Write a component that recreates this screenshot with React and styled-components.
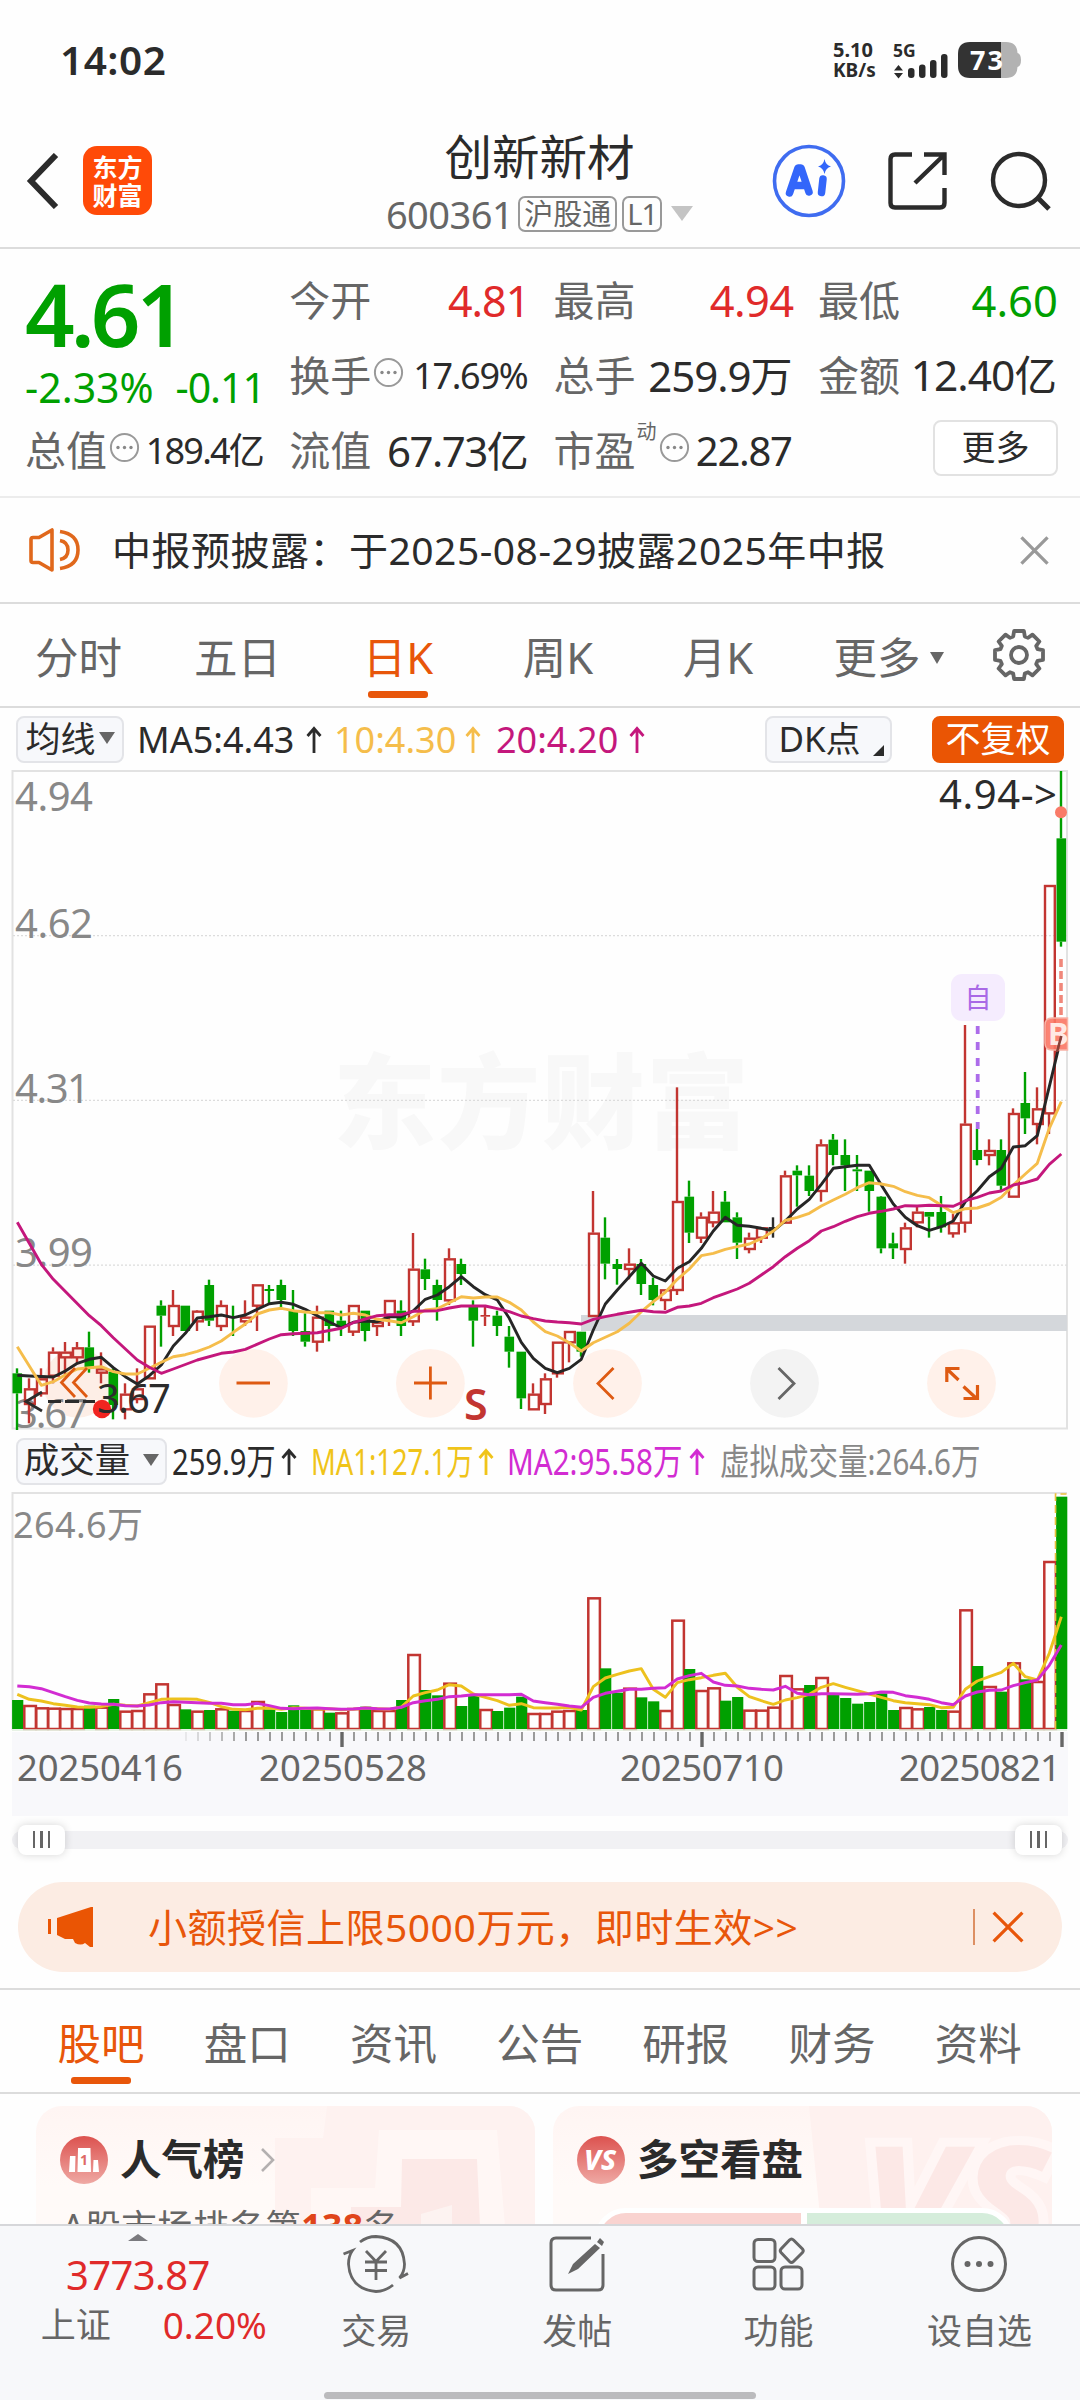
import React from "react";
import styled, { createGlobalStyle } from "styled-components";

const ink = "#2b2b2b";
const grey = "#666666";
const red = "#e02a2a";
const green = "#00a000";
const orange = "#e8560a";
const candleRed = "#c23531";

const Global = createGlobalStyle`
  * { box-sizing: border-box; }
  body {
    margin: 0;
    background: #fff;
    color: ${ink};
    font-family: "Noto Sans", "Noto Sans CJK SC", sans-serif;
    -webkit-font-smoothing: antialiased;
  }
`;

const Screen = styled.div`
  width: 1080px;
  height: 2400px;
  overflow: hidden;
  display: flex;
  flex-direction: column;
  background: #fefefe;
`;

const Label = styled.span`
  font-size: ${(p) => p.$size}px;
  line-height: 1;
  white-space: nowrap;
  color: ${(p) => p.$color || "inherit"};
  font-weight: ${(p) => p.$weight || 400};
  letter-spacing: ${(p) => p.$track || 0}px;
`;

/* ---------- status bar ---------- */
const StatusBar = styled.div`
  height: 120px;
  display: flex;
  align-items: flex-start;
  padding: 40px 57px 0 60px;
`;
const Clock = styled.div`
  font-size: 40.5px;
  line-height: 40px;
  font-weight: 600;
  flex: 1;
  letter-spacing: 0.5px;
`;
const NetSpeed = styled.div`
  display: flex;
  flex-direction: column;
  font-size: 20px;
  line-height: 21px;
  font-weight: 700;
  width: 60px;
  white-space: nowrap;
  margin-top: -1px;
  span + span {
    font-size: 19px;
  }
`;
const StatusIcon = styled.svg`
  display: block;
`;

/* ---------- header ---------- */
const Header = styled.header`
  height: 129px;
  border-bottom: 2px solid #dcdcdc;
  display: flex;
  align-items: center;
  padding: 0 29px 6px 26px;
`;
const Logo = styled.div`
  width: 69px;
  height: 69px;
  margin-left: 24px;
  border-radius: 14px;
  background: #ff4a08;
  color: #fff;
  font-size: 25px;
  line-height: 28px;
  font-weight: 700;
  display: flex;
  flex-direction: column;
  align-items: center;
  justify-content: center;
`;
const TitleBlock = styled.div`
  flex: 1;
  display: flex;
  flex-direction: column;
  align-items: center;
  gap: 14px;
  padding-left: 155px;
  margin-top: 5px;
`;
const CodeRow = styled.div`
  display: flex;
  align-items: center;
  gap: 5px;
`;
const Tag = styled.span`
  height: 36px;
  padding: 0 ${(p) => p.$pad}px;
  border: 2px solid #999;
  border-radius: 7px;
  font-size: 29px;
  line-height: 31px;
  letter-spacing: ${(p) => p.$track || 0}px;
  color: ${grey};
`;
const HeaderIcons = styled.div`
  display: flex;
  align-items: center;
  gap: 42px;
`;

const Caret = styled.span`
  width: 0;
  height: 0;
  flex: none;
  border-left: ${(p) => p.$w / 2}px solid transparent;
  border-right: ${(p) => p.$w / 2}px solid transparent;
  border-${(p) => (p.$up ? "bottom" : "top")}: ${(p) => p.$h}px solid ${(p) => p.$color || grey};
  margin-left: ${(p) => p.$ml || 0}px;
`;

/* ---------- quote ---------- */
const Quote = styled.section`
  height: 249px;
  border-bottom: 2px solid #ececec;
  padding: 14px 25px 0 25px;
  display: grid;
  grid-template-columns: repeat(4, 237px);
  column-gap: 27.3px;
  grid-template-rows: repeat(3, 75px);
`;
const PriceCell = styled.div`
  grid-row: span 2;
  display: flex;
  flex-direction: column;
  color: ${green};
`;
const BigPrice = styled.div`
  font-size: 87px;
  line-height: 100px;
  font-weight: 600;
  letter-spacing: -4px;
`;
const ChangeRow = styled.div`
  display: flex;
  justify-content: space-between;
  font-size: 41px;
  line-height: 46px;
  margin: 4px -3px 0 0;
`;
const Cell = styled.div`
  display: flex;
  align-items: center;
  justify-content: space-between;
  white-space: nowrap;
`;
const CellName = styled.span`
  display: flex;
  align-items: center;
  color: ${grey};
  font-size: 41px;
  line-height: 1;
`;
const CellValue = styled.span`
  font-size: ${(p) => p.$size || 42}px;
  line-height: 1;
  color: ${(p) => p.$color || ink};
  letter-spacing: ${(p) => p.$track ?? -1}px;
  margin-right: ${(p) => (p.$color ? -3 : -1)}px;
`;
const Sup = styled.sup`
  font-size: 20px;
  line-height: 1;
  align-self: flex-start;
  margin: -8px 0 0 1px;
`;
const MoreButton = styled.button`
  margin: 0 -3px 5px auto;
  width: 125px;
  height: 56px;
  border: 2px solid #e2e2e2;
  border-radius: 8px;
  background: #fff;
  font: inherit;
  font-size: 34px;
  line-height: 1;
  padding: 0 0 3px;
  color: ${ink};
`;

/* ---------- notice ---------- */
const Notice = styled.div`
  height: 106px;
  border-bottom: 2px solid #dcdcdc;
  display: flex;
  align-items: center;
  padding: 0 31px 0 28px;
`;
const NoticeText = styled.div`
  flex: 1;
  margin-left: ${(p) => p.$ml}px;
  padding-bottom: ${(p) => p.$lift || 0}px;
  font-size: 39px;
  line-height: 1;
  white-space: nowrap;
  letter-spacing: ${(p) => p.$track || 0}px;
`;

/* ---------- tabs ---------- */
const Tabs = styled.nav`
  height: ${(p) => (p.$top ? 106 : 104)}px;
  border-top: ${(p) => (p.$top ? "2px solid #dcdcdc" : "none")};
  border-bottom: 2px solid #dcdcdc;
  display: flex;
  padding: 0 ${(p) => p.$pad || 0}px;
`;
const Tab = styled.div`
  width: ${(p) => p.$w}px;
  flex: none;
  display: flex;
  flex-direction: column;
  align-items: center;
  color: ${(p) => (p.$active ? orange : grey)};
  padding-top: 32px;
  &::after {
    content: "";
    width: 60px;
    height: 7px;
    border-radius: 3px;
    margin-top: 12px;
    background: ${(p) => (p.$active ? orange : "transparent")};
  }
`;
const TabText = styled.span`
  display: flex;
  align-items: center;
  font-size: 43.5px;
  line-height: 43px;
  height: 43px;
  white-space: nowrap;
`;
const Gear = styled.svg`
  margin-top: -7px;
`;

/* ---------- indicator rows ---------- */
const Bar = styled.div`
  height: 62px;
  display: flex;
  align-items: center;
  padding: 0 16px;
`;
const Chip = styled.div`
  height: 47px;
  width: ${(p) => p.$w}px;
  margin-left: ${(p) => p.$ml || 0}px;
  flex: none;
  border: 2px solid ${(p) => (p.$solid ? "#ea5504" : "#e3e4e8")};
  border-radius: 8px;
  background: ${(p) => (p.$solid ? "#ea5504" : "#f7f8fb")};
  color: ${(p) => (p.$solid ? "#fff" : ink)};
  display: flex;
  align-items: center;
  justify-content: center;
  font-size: 35px;
  line-height: 1;
  white-space: nowrap;
  padding-bottom: 2px;
`;
const Corner = styled.span`
  border-left: 11px solid transparent;
  border-bottom: 11px solid ${ink};
  margin: 24px -5px 0 12px;
`;
const Values = styled.div`
  display: flex;
  align-items: center;
  flex: 1;
  margin-left: ${(p) => p.$ml}px;
  padding-top: 1px;
`;
const Value = styled.span`
  width: ${(p) => p.$w}px;
  flex: none;
  color: ${(p) => p.$color};
  font-size: 36px;
  line-height: 1;
  white-space: nowrap;
  display: flex;
  align-items: center;
`;
const Condensed = styled.span`
  display: inline-block;
  transform: scaleX(${(p) => p.$x});
  transform-origin: left;
`;
const Arrow = ({ color }) => (
  <svg width="16" height="28" viewBox="0 0 16 28" fill="none" stroke={color} strokeWidth="2.8">
    <path d="M8 27V3M1.5 10L8 2.5L14.5 10" />
  </svg>
);

const ChartSvg = styled.svg`
  display: block;
  flex: none;
  font-family: "Noto Sans", "Noto Sans CJK SC", sans-serif;
`;

/* ---------- slider ---------- */
const SliderRow = styled.div`
  height: 67px;
  display: flex;
  align-items: center;
  padding: 0 12px;
  margin-top: -10px;
`;
const Track = styled.div`
  flex: 1;
  height: 18px;
  border-radius: 9px;
  background: #f1f1f4;
  display: flex;
  align-items: center;
  justify-content: space-between;
  padding: 0 6px;
`;
const Thumb = styled.div`
  width: 47px;
  height: 30px;
  border-radius: 8px;
  background: #fff;
  box-shadow: 0 0 8px rgba(0, 0, 0, 0.16);
  display: flex;
  align-items: center;
  justify-content: center;
  gap: 5px;
  i {
    width: 2.5px;
    height: 17px;
    background: ${grey};
  }
`;

/* ---------- promo banner ---------- */
const Promo = styled.div`
  height: 90px;
  margin: 9px 18px 16px 18px;
  border-radius: 45px;
  background: #fcece3;
  color: ${orange};
  display: flex;
  align-items: center;
  padding: 0 38px 0 29px;
`;
const Divider = styled.span`
  width: 2px;
  height: 36px;
  background: #dd8f63;
  margin-right: 17px;
`;

/* ---------- cards ---------- */
const Cards = styled.div`
  height: 130px;
  overflow: hidden;
  display: grid;
  grid-template-columns: 499px 499px;
  column-gap: 18px;
  padding: 12px 0 0 36px;
`;
const Card = styled.div`
  height: 240px;
  border-radius: 26px;
  background: linear-gradient(#fff5f3, #fffaf8 80px);
  position: relative;
  overflow: hidden;
`;
const CardArt = styled.svg`
  position: absolute;
  right: 0;
  top: 0;
`;
const CardHead = styled.div`
  position: relative;
  display: flex;
  align-items: center;
  padding: 30px 0 0 24px;
  height: 78px;
`;
const CardTitle = styled.span`
  font-size: 41.5px;
  line-height: 48px;
  height: 51px;
  font-weight: 600;
  margin: 0 15px 0 12px;
`;
const Rank = styled.div`
  position: relative;
  display: flex;
  align-items: baseline;
  font-size: 35.5px;
  line-height: 40px;
  color: ${grey};
  margin: 22px 0 0 26px;
  letter-spacing: 0.5px;
  b { color: #e0451a; }
`;
const Battle = styled.div`
  position: relative;
  display: flex;
  gap: 6px;
  width: 420px;
  height: 60px;
  border: 5px solid #fff;
  border-radius: 32px 32px 0 0;
  overflow: hidden;
  margin: 24px 0 0 41px;
  background: #fff;
`;
const Side = styled.div`
  flex: 1;
  background: ${(p) => p.$bg};
`;

/* ---------- bottom bar ---------- */
const BottomBar = styled.footer`
  flex: 1;
  background: #f7f8fa;
  border-top: 2px solid #d6d7da;
  display: flex;
  flex-direction: column;
  align-items: center;
  z-index: 1;
`;
const BottomItems = styled.div`
  width: 1080px;
  height: 166px;
  display: flex;
`;
const IndexBox = styled.div`
  width: 276px;
  display: flex;
  flex-direction: column;
  align-items: center;
  padding-top: 8px;
`;
const IndexValue = styled.div`
  font-size: 40px;
  line-height: 48px;
  letter-spacing: -0.6px;
  color: ${red};
  margin-top: 10px;
`;
const IndexRow = styled.div`
  width: 226px;
  margin: 1px 0 0 32px;
  display: flex;
  align-items: center;
  justify-content: space-between;
  height: 48px;
`;
const NavItem = styled.div`
  width: 201.3px;
  display: flex;
  flex-direction: column;
  align-items: center;
  padding-top: 9px;
  gap: 20px;
`;
const HomeBar = styled.div`
  width: 432px;
  height: 7px;
  border-radius: 4px;
  background: #bbbbbd;
  margin-bottom: auto;
`;

/* ---------- market data ---------- */
const STEP = 12;
const xAt = (i) => 17.3 + i * STEP;

/* kind, high, body top, body bottom, low — in thirds of a pixel below the segment base */
const segments = [
  {
    base: 1150,
    start: 0,
    rows: [
      ["g", 655, 670, 730, 840], ["r", 685, 715, 762, 820], ["r", 655, 685, 730, 740],
      ["r", 592, 605, 677, 700], ["r", 576, 605, 622, 680], ["r", 576, 592, 622, 640],
      ["g", 545, 592, 655, 668], ["r", 607, 655, 668, 700], ["g", 655, 665, 765, 808],
      ["r", 700, 731, 778, 808], ["r", 655, 715, 747, 760], ["r", 527, 527, 685, 685],
      ["g", 451, 467, 497, 590], ["r", 420, 465, 528, 558], ["g", 467, 467, 543, 543],
      ["r", 480, 482, 514, 543], ["g", 389, 405, 512, 528], ["r", 451, 465, 528, 543],
      ["g", 467, 498, 504, 558], ["r", 451, 500, 514, 528], ["r", 403, 403, 467, 543],
      ["g", 405, 417, 423, 460], ["g", 389, 405, 450, 480], ["g", 420, 480, 543, 558],
      ["g", 490, 543, 575, 590], ["r", 467, 500, 575, 605], ["g", 482, 482, 528, 574],
      ["g", 482, 512, 530, 558], ["r", 465, 465, 545, 558], ["g", 482, 482, 543, 574],
      ["r", 510, 515, 528, 558], ["r", 450, 450, 500, 528], ["g", 451, 482, 528, 558],
      ["r", 249, 356, 514, 528], ["g", 326, 358, 387, 420], ["g", 389, 405, 450, 512],
      ["r", 295, 325, 451, 465], ["g", 326, 342, 372, 405], ["g", 451, 467, 512, 590],
      ["r", 465, 495, 500, 528], ["g", 482, 497, 528, 558], ["g", 528, 560, 605, 653],
      ["g", 605, 605, 745, 777], ["r", 700, 731, 778, 778],
    ],
  },
  {
    base: 1050,
    start: 44,
    rows: [
      ["r", 970, 985, 1062, 1092], ["r", 875, 875, 970, 983], ["r", 843, 843, 877, 937],
      ["g", 845, 845, 905, 920], ["r", 423, 548, 798, 798], ["g", 502, 563, 641, 688],
      ["g", 627, 642, 657, 704], ["r", 595, 641, 657, 688], ["g", 627, 642, 702, 735],
      ["g", 683, 705, 750, 766], ["r", 718, 718, 750, 780], ["r", 112, 453, 720, 735],
      ["g", 392, 440, 548, 579], ["r", 487, 500, 563, 579], ["r", 423, 485, 517, 532],
      ["g", 423, 455, 517, 517], ["g", 487, 502, 578, 627], ["r", 548, 563, 597, 610],
      ["r", 532, 532, 563, 579], ["k", 502, 531, 537, 563], ["r", 362, 376, 518, 518],
      ["g", 346, 362, 376, 470], ["g", 346, 377, 423, 438], ["r", 268, 283, 423, 455],
      ["g", 252, 269, 315, 346], ["g", 268, 315, 346, 423], ["g", 315, 358, 364, 423],
      ["g", 362, 362, 423, 485], ["g", 438, 440, 595, 610], ["g", 548, 580, 595, 627],
      ["r", 518, 532, 597, 641], ["r", 470, 485, 517, 532], ["g", 486, 486, 500, 563],
      ["g", 438, 486, 532, 548], ["r", 492, 517, 550, 563], ["r", -75, 221, 518, 548],
      ["g", 237, 300, 330, 346], ["r", 268, 300, 315, 346], ["g", 268, 300, 407, 420],
      ["r", 175, 189, 440, 440], ["g", 66, 159, 205, 252], ["r", 112, 175, 222, 283],
      ["r", -495, -495, 190, 252], ["g", -837, -635, -325, -310],
    ],
  },
];

const candles = segments.flatMap((s) =>
  s.rows.map(([kind, ...v], i) => ({ kind, i: s.start + i, y: v.map((n) => s.base + n / 3) }))
);

/* moving averages: [index, y] pairs per segment */
const ma5 = [
  [0, 676, 1, 678, 3, 681, 4, 663, 5, 640, 6, 628, 7, 622, 8, 653, 9, 680, 10, 702, 11, 677, 12, 645, 13, 588, 14, 550, 15, 504, 16, 500, 17, 495, 18, 503, 19, 495, 20, 478, 21, 461, 22, 457, 23, 463, 24, 478, 25, 497, 26, 516, 27, 533, 28, 517, 29, 513, 30, 515, 31, 500, 32, 500, 33, 482, 34, 448, 35, 435, 36, 410, 37, 380, 38, 410, 39, 434, 40, 450, 41, 505, 42, 577, 43, 625],
  [44, 955, 45, 968, 46, 955, 47, 928, 48, 840, 49, 762, 50, 720, 51, 680, 52, 640, 53, 678, 54, 693, 55, 655, 56, 635, 57, 595, 58, 543, 59, 502, 60, 526, 61, 529, 62, 535, 63, 543, 64, 513, 65, 477, 66, 448, 67, 403, 68, 355, 69, 350, 70, 346, 71, 346, 72, 405, 73, 462, 74, 502, 75, 527, 76, 541, 77, 530, 78, 513, 79, 455, 80, 422, 81, 380, 82, 355, 83, 291, 84, 287, 85, 257, 86, 110, 87, -40],
];
const ma10 = [
  [0, 590, 2, 706, 3, 695, 4, 675, 5, 657, 6, 653, 7, 650, 8, 665, 9, 672, 10, 672, 11, 655, 12, 637, 13, 620, 14, 614, 15, 604, 16, 591, 17, 573, 18, 547, 19, 522, 20, 492, 21, 480, 22, 475, 23, 482, 24, 486, 25, 488, 26, 488, 27, 495, 28, 490, 29, 495, 30, 508, 31, 512, 32, 518, 33, 500, 34, 480, 35, 476, 36, 458, 37, 440, 38, 444, 39, 441, 40, 441, 41, 457, 42, 480, 43, 516],
  [44, 845, 45, 858, 46, 878, 47, 903, 48, 878, 49, 862, 50, 845, 51, 820, 52, 785, 53, 755, 54, 727, 55, 688, 56, 657, 57, 617, 58, 610, 59, 598, 60, 590, 61, 582, 62, 566, 63, 543, 64, 511, 65, 502, 66, 490, 67, 468, 68, 450, 69, 433, 70, 413, 71, 398, 72, 402, 73, 409, 74, 425, 75, 436, 76, 443, 77, 466, 78, 488, 79, 476, 80, 474, 81, 462, 82, 442, 83, 405, 84, 372, 85, 340, 86, 235, 87, 155],
];
const ma20 = [
  [0, 217, 2, 343, 3, 388, 6, 497, 7, 527, 8, 563, 10, 630, 11, 652, 12, 670, 13, 657, 15, 630, 17, 610, 18, 606, 19, 598, 21, 567, 22, 554, 23, 551, 25, 548, 27, 535, 28, 518, 29, 507, 30, 497, 31, 494, 32, 494, 33, 484, 35, 482, 36, 474, 37, 468, 39, 468, 40, 476, 41, 485, 42, 498, 43, 506],
  [44, 813, 45, 816, 46, 818, 47, 822, 48, 808, 49, 800, 50, 793, 52, 781, 53, 785, 54, 787, 55, 772, 56, 768, 57, 760, 58, 743, 59, 730, 60, 717, 61, 700, 62, 675, 63, 650, 64, 620, 65, 595, 66, 572, 67, 543, 68, 530, 69, 514, 70, 500, 71, 490, 72, 484, 73, 477, 74, 467, 75, 468, 76, 466, 77, 467, 78, 469, 79, 452, 80, 442, 81, 429, 82, 423, 83, 405, 84, 398, 85, 387, 86, 343, 87, 312],
];
const pairs = (flat, base) => {
  const out = [];
  for (let k = 0; k < flat.length; k += 2) out.push(`${xAt(flat[k])},${(base + flat[k + 1] / 3).toFixed(1)}`);
  return out;
};
const maPoints = ([a, b]) => [...pairs(a, 1150), ...pairs(b, 1050)].join(" ");

const volumeTops = [
  660, 675, 682, 683, 684, 684, 677, 680, 657, 692, 690, 640, 610, 672, 688, 692, 690, 685, 692, 690, 663, 688,
  696, 676, 690, 685, 698, 697, 684, 680, 690, 690, 660, 522, 630, 646, 608, 678, 648, 687, 693, 683, 650, 699,
  699, 692, 690, 690, 352, 565, 638, 623, 652, 664, 690, 419, 567, 630, 622, 662, 651, 689, 689, 680, 585, 625,
  615, 591, 640, 654, 671, 666, 640, 690, 681, 685, 681, 690, 692, 388, 558, 618, 635, 547, 598, 603, 243, 50,
];
/* sessions that closed below their open but above the previous close */
const risingVolume = new Set([12, 27, 65]);
const fallingVolume = new Set([60]);
const volMa1 = [
  643, 658, 663, 671, 676, 681, 682, 680, 673, 676, 678, 668, 658, 657, 657, 658, 667, 680, 688, 689, 685, 684,
  688, 683, 685, 687, 686, 689, 688, 684, 686, 688, 681, 648, 638, 630, 614, 618, 642, 652, 662, 676, 671, 683,
  684, 684, 682, 690, 620, 594, 583, 573, 566, 628, 652, 608, 599, 593, 586, 580, 622, 650, 662, 673, 660, 653,
  643, 622, 611, 622, 632, 642, 652, 662, 668, 671, 674, 683, 682, 628, 603, 590, 577, 550, 590, 600, 520, 410,
];
const volMa2 = [
  618, 620, 626, 638, 650, 661, 669, 672, 673, 677, 678, 675, 668, 665, 667, 668, 670, 670, 674, 674, 670, 677,
  685, 686, 685, 684, 686, 688, 687, 684, 686, 687, 682, 668, 662, 658, 650, 648, 644, 644, 644, 644, 643, 663,
  668, 673, 678, 682, 652, 640, 634, 628, 628, 625, 623, 597, 587, 580, 606, 616, 618, 625, 628, 630, 619, 640,
  644, 641, 641, 642, 643, 641, 636, 637, 647, 652, 658, 668, 674, 648, 636, 631, 630, 617, 608, 600, 556, 495,
];
const volY = (v) => 1480 + v / 3;
const volLine = (arr) => arr.map((v, i) => `${xAt(i)},${volY(v).toFixed(1)}`).join(" ");
/* index 59 opened a filled bar in the volume pane */
fallingVolume.add(59);

function Candle({ kind, i, y }) {
  const [h, t, b, l] = y;
  const x = xAt(i);
  const color = kind === "g" ? green : kind === "k" ? ink : candleRed;
  const hollow = kind === "r" && b - t > 3;
  return (
    <g stroke={color} strokeWidth="2.4">
      {h < t && <line x1={x - 0.3} x2={x - 0.3} y1={h} y2={t} />}
      {l > b && <line x1={x - 0.3} x2={x - 0.3} y1={b} y2={l} />}
      {hollow ? (
        <rect x={x - 4.3} y={t + 1} width="9.8" height={Math.max(b - t - 1, 2)} fill="none" />
      ) : (
        <rect x={x - 4.8} y={t} width="9.6" height={b - t} fill={color} stroke="none" />
      )}
    </g>
  );
}

const roundButtons = [
  [77.5, "#fdeee6", <path key="p" d="M75 1368L61.5 1382.5L75 1397M87 1368L73.5 1382.5L87 1397" />],
  [253.4, "#fff1ea", <path key="p" d="M236.5 1383H270" />],
  [430.4, "#fff1ea", <path key="p" d="M414 1383H447M430.4 1366.5V1399.5" />],
  [607.5, "#fff1ea", <path key="p" d="M613.5 1368L598 1383.5L613.5 1399" />],
  [784.5, "#f3f3f3", <path key="p" d="M778.5 1368L794 1383.5L778.5 1399" stroke={grey} />],
  [961.5, "#fff1ea", <path key="p" strokeWidth="3.2" d="M959.5 1368.5H946.8V1382M947 1369L958.5 1380M963.5 1386.5L976 1398M977.5 1385V1398.5H963.5" />],
];

function PriceChart() {
  const grid = [[935.6, 938, "4.62"], [1100.4, 1103, "4.31"], [1265.2, 1267, "3.99"]];
  return (
    <ChartSvg width="1080" height="660" viewBox="0 770 1080 660">
      <rect x="12.5" y="771" width="1054.5" height="657.5" fill="none" stroke="#e2e2e2" strokeWidth="2" />
      <text x="333" y="1141" fontSize="103" fontWeight="900" fill="#f8f8f8" fontFamily="Noto Sans CJK SC" textLength="416">东方财富</text>
      {grid.map(([y]) => (
        <line key={y} x1="13" x2="1067" y1={y} y2={y} stroke="#dcdcdc" strokeWidth="1.2" strokeDasharray="2 2" />
      ))}
      <rect x="581" y="1315" width="486" height="16" fill="#d4d7db" />
      {roundButtons.map(([cx, fill]) => (
        <circle key={cx} cx={cx} cy="1383.3" r="34.4" fill={fill} />
      ))}
      <g fontSize="40" fill="#888">
        <text x="15" y="811" textLength="78">4.94</text>
        {grid.map(([, y, t]) => (
          <text key={t} x="15" y={y} textLength={t === "4.31" ? 75 : 78}>{t}</text>
        ))}
        <text x="15" y="1427.5" textLength="73">3.67</text>
      </g>
      {candles.map((c) => (
        <Candle key={c.i} {...c} />
      ))}
      <circle cx="102" cy="1409" r="9.2" fill="#f12420" />
      <g fill="none" strokeWidth="2.9" strokeLinejoin="round">
        <polyline points={maPoints(ma5)} stroke="#262626" />
        <polyline points={maPoints(ma10)} stroke="#f5bd4b" />
        <polyline points={maPoints(ma20)} stroke="#c4177c" />
      </g>
      <g fill="none" stroke="#de5a12" strokeWidth="2.8">
        {roundButtons.map(([cx, , icon]) => (
          <g key={cx}>{icon}</g>
        ))}
      </g>
      <path d="M42 1392L26 1401.5L42 1411M48 1401.5H61M65 1401.5H79M83 1401.5H95" fill="none" stroke={ink} strokeWidth="2.8" />
      <text x="97" y="1413" fontSize="40" fill={ink} textLength="74">3.67</text>
      <text x="464" y="1420" fontSize="43" fontWeight="600" fill={candleRed}>S</text>
      <text x="939" y="809" fontSize="40" fill={ink} textLength="118">4.94-&gt;</text>
      <circle cx="1061" cy="812.3" r="6" fill="#f97b68" />
      <line x1="1061" x2="1061" y1="959" y2="1016" stroke="#f0877a" strokeWidth="3.6" strokeDasharray="8 4" />
      <line x1="977.7" x2="977.7" y1="1026" y2="1129" stroke="#ac6cea" strokeWidth="3.8" strokeDasharray="8 8" />
      <rect x="951" y="974" width="54" height="47" rx="11" fill="#f5ecfe" />
      <text x="978" y="1007.5" fontSize="27" fill="#a969e6" textAnchor="middle">自</text>
      <path d="M1067.5 1018H1052Q1045 1018 1045 1025V1043Q1045 1050 1052 1050H1067.5Z" fill="#fb7564" fillOpacity="0.9" stroke="#f9b3a6" strokeWidth="1.5" />
      <svg x="1046" y="1018" width="22" height="32">
        <text x="2" y="27" fontSize="31" fontWeight="700" fill="#ffe9e5">B</text>
      </svg>
      <line x1="1057" y1="1052" x2="1061.3" y2="1036" stroke="#8a4038" strokeWidth="2.6" />
    </ChartSvg>
  );
}

function VolumeChart() {
  return (
    <ChartSvg width="1080" height="324" viewBox="0 1492 1080 324">
      <path d="M12.5 1730V1493H1067" fill="none" stroke="#e2e2e2" strokeWidth="2" />
      <rect x="12" y="1732" width="1056" height="84" fill="#f8f8fb" />
      <text x="13" y="1538" fontSize="36" fill="#888" textLength="130">264.6万</text>
      {volumeTops.map((v, i) => {
        const y = volY(v);
        const isGreen = (candles[i].kind === "g" && !risingVolume.has(i)) || fallingVolume.has(i);
        return isGreen ? (
          <rect key={i} x={xAt(i) - 5.2} y={y} width="11.2" height={1729 - y} fill={green} />
        ) : (
          <rect key={i} x={xAt(i) - 5} y={y + 1} width="11.6" height={1728 - y} fill="#fefefe" stroke={candleRed} strokeWidth="2.5" />
        );
      })}
      <path d="M1055.5 1729V1494H1066.5" fill="none" stroke="#eac13c" strokeWidth="1.6" strokeDasharray="8 4" />
      <line x1="12" x2="1067" y1="1730" y2="1730" stroke="#dfeedd" strokeWidth="1.5" />
      <g fill="none" strokeWidth="2.9" strokeLinejoin="round">
        <polyline points={volLine(volMa1)} stroke="#edc11e" />
        <polyline points={volLine(volMa2)} stroke="#d22cd2" />
      </g>
      {candles.slice(14).map(({ i }) => {
        const major = i === 27 || i === 57 || i === 87;
        return (
          <line
            key={i}
            x1={xAt(i) + 0.7}
            x2={xAt(i) + 0.7}
            y1="1732"
            y2={major ? 1747 : 1741}
            stroke={major ? "#666" : "#909090"}
            strokeWidth={major ? 3.4 : 1.8}
            opacity={Math.min(1, (i - 13) / 6)}
          />
        );
      })}
      <g fontSize="36.5" fill={grey}>
        <text x="17" y="1781" textLength="166">20250416</text>
        <text x="259" y="1781" textLength="168">20250528</text>
        <text x="620" y="1781" textLength="164">20250710</text>
        <text x="899" y="1781" textLength="162">20250821</text>
      </g>
    </ChartSvg>
  );
}

const DotsIcon = styled.svg`
  margin: -7px 0 0 2px;
`;
const Dots = () => (
  <DotsIcon width="31" height="31" viewBox="0 0 31 31">
    <circle cx="15.5" cy="15.5" r="13.6" fill="none" stroke="#999" strokeWidth="2" />
    <g fill="#888">
      <circle cx="9" cy="15.5" r="1.7" />
      <circle cx="15.5" cy="15.5" r="1.7" />
      <circle cx="22" cy="15.5" r="1.7" />
    </g>
  </DotsIcon>
);

function Item({ name, value, dots, sup, ...rest }) {
  return (
    <Cell>
      <CellName>
        {name}
        {sup && <Sup>{sup}</Sup>}
        {dots && <Dots />}
      </CellName>
      <CellValue $size={rest.size} $color={rest.color} $track={rest.track}>{value}</CellValue>
    </Cell>
  );
}

const Cross = ({ color, size, w }) => (
  <svg width={size} height={size} viewBox="0 0 30 30" stroke={color} strokeWidth={w} fill="none">
    <path d="M1.5 1.5L28.5 28.5M28.5 1.5L1.5 28.5" />
  </svg>
);

function gearPath(cx, cy) {
  const pts = [];
  for (let k = 0; k < 8; k++) {
    const a = (k * Math.PI) / 4 - Math.PI / 2;
    [[-0.2, 24.5], [0.2, 24.5], [0.3, 19.5], [Math.PI / 4 - 0.3, 19.5]].forEach(([d, r]) => {
      pts.push(`${(cx + r * Math.cos(a + d)).toFixed(1)} ${(cy + r * Math.sin(a + d)).toFixed(1)}`);
    });
  }
  return `M${pts.join("L")}Z`;
}

export default function App() {
  return (
    <>
      <Global />
      <Screen>
        <StatusBar>
          <Clock>14:02</Clock>
          <NetSpeed>
            <span>5.10</span>
            <span>KB/s</span>
          </NetSpeed>
          <StatusIcon width="130" height="40" viewBox="892 40 130 40">
            <text x="892" y="56.5" fontSize="17.500" fontWeight="700" fill={ink}>5G</text>
            <path d="M893 70.5L897.5 65L902 70.5ZM893 73L897.5 78.5L902 73Z" fill={ink} />
            <g fill={ink}>
              <rect x="907" y="68" width="6.5" height="10" rx="3" />
              <rect x="918" y="64.5" width="6.5" height="13.5" rx="3" />
              <rect x="929" y="60" width="6.5" height="18" rx="3" />
              <rect x="940" y="54" width="6.5" height="24" rx="3" />
            </g>
            <path d="M1000 42H1005Q1016 42 1016.5 53Q1020 54 1020 60Q1020 66 1016.5 67Q1016 78 1005 78H1000Z" fill="#b2b2b2" />
            <path d="M1000 42H969Q957 42 957 54V66Q957 78 969 78H1000Z" fill="#333" />
            <text x="969" y="69.5" fontSize="27" fontWeight="700" fill="#fff" textLength="33">73</text>
          </StatusIcon>
        </StatusBar>

        <Header>
          <svg width="33" height="56" viewBox="0 0 33 56" fill="none" stroke={ink} strokeWidth="6">
            <path d="M30 2L5 28L30 54" />
          </svg>
          <Logo>
            <span>东方</span>
            <span>财富</span>
          </Logo>
          <TitleBlock>
            <Label $size={47.5}>创新新材</Label>
            <CodeRow>
              <Label $size={38} $color={grey} $track={-0.5}>600361</Label>
              <Tag $pad={4}>沪股通</Tag>
              <Tag $pad={3} $track={-1}>L1</Tag>
              <Caret $w={22} $h={15} $color="#c4c4c4" $ml={4} />
            </CodeRow>
          </TitleBlock>
          <HeaderIcons>
            <svg width="74" height="74" viewBox="0 0 74 74">
              <circle cx="37" cy="37" r="34.5" fill="none" stroke="#3f6cf0" strokeWidth="3.6" />
              <g fill="none" stroke="#3366fa" strokeWidth="7.5" strokeLinecap="round" strokeLinejoin="round">
                <path d="M17.500 49L26 24H29L37 48M22 41.500H34" />
                <path d="M51 35L49.500 48.500" />
              </g>
              <path d="M52.500 15Q53.500 21 59 22.500Q53.500 24 52.500 30Q51.500 24 46 22.500Q51.500 21 52.500 15Z" fill="#3366fa" />
            </svg>
            <svg width="59" height="58" viewBox="0 0 59 58" fill="none" stroke={ink} strokeWidth="4.400">
              <path d="M24 2.500H7Q2.500 2.500 2.500 7V51Q2.500 55.500 7 55.500H52Q56.500 55.500 56.500 51V36M36 2.500H56.500V23M56 3L27 31" />
            </svg>
            <svg width="62" height="60" viewBox="0 0 62 60" fill="none" stroke={ink} strokeWidth="4.400">
              <circle cx="30" cy="29" r="26" />
              <path d="M48 46L60 58" strokeWidth="5" />
            </svg>
          </HeaderIcons>
        </Header>

        <Quote>
          <PriceCell>
            <BigPrice>4.61</BigPrice>
            <ChangeRow>
              <Label $size={41}>-2.33%</Label>
              <Label $size={41} $track={-1}>-0.11</Label>
            </ChangeRow>
          </PriceCell>
          <Item name="今开" value="4.81" color={red} size={43} track={-1} />
          <Item name="最高" value="4.94" color={red} size={43.5} track={-0.6} />
          <Item name="最低" value="4.60" color={green} size={43.5} track={0} />
          <Item name="换手" dots value="17.69%" size={36} track={-1.3} />
          <Item name="总手" value="259.9万" size={42} track={-1} />
          <Item name="金额" value="12.40亿" size={42.5} track={-1} />
          <Item name="总值" dots value="189.4亿" size={36} track={-1.8} />
          <Item name="流值" value="67.73亿" size={42} track={-1.5} />
          <Item name="市盈" sup="动" dots value="22.87" size={40} track={-1.3} />
          <Cell>
            <MoreButton>更多</MoreButton>
          </Cell>
        </Quote>

        <Notice>
          <svg width="55" height="44" viewBox="0 0 55 44" fill="none" stroke="#e0681c" strokeWidth="3.600" strokeLinejoin="round">
            <path d="M3 11.500Q3 9.500 5 9.500H11L24 2V42L11 34.500H5Q3 34.500 3 32.500Z" />
            <path d="M32 12.500Q40 14 40 22Q40 30 32 31.500M32 3.500Q50 6 50 22Q50 38 32 40.500" />
          </svg>
          <NoticeText $ml={29} $lift={1} $track={0.5}>中报预披露：于2025-08-29披露2025年中报</NoticeText>
          <Cross color="#999" size={29} w={3.4} />
        </Notice>

        <Tabs>
          <Tab $w={157}><TabText>分时</TabText></Tab>
          <Tab $w={161}><TabText>五日</TabText></Tab>
          <Tab $w={160} $active><TabText>日K</TabText></Tab>
          <Tab $w={160}><TabText>周K</TabText></Tab>
          <Tab $w={160}><TabText>月K</TabText></Tab>
          <Tab $w={181}><TabText>更多<Caret $w={15} $h={12} $ml={9} /></TabText></Tab>
          <Tab $w={79}>
            <Gear width="52" height="52" viewBox="0 0 52 52" fill="none" stroke={grey} strokeWidth="3.800" strokeLinejoin="round">
              <path d={gearPath(26, 26)} />
              <circle cx="26" cy="26" r="8" />
            </Gear>
          </Tab>
        </Tabs>

        <Bar>
          <Chip $w={108}>
            <Label $size={35}>均线</Label>
            <Caret $w={16} $h={12} $ml={3} />
          </Chip>
          <Values $ml={13}>
            <Value $w={169} $color={ink}>MA5:4.43</Value>
            <Value $w={28} $color={ink}><Arrow color={ink} /></Value>
            <Value $w={131} $color="#f5bd4b">10:4.30</Value>
            <Value $w={31} $color="#f5bd4b"><Arrow color="#f5bd4b" /></Value>
            <Value $w={133} $color="#c4177c">20:4.20</Value>
            <Value $w={30} $color="#c4177c"><Arrow color="#c4177c" /></Value>
          </Values>
          <Chip $w={127}>
            DK点<Corner />
          </Chip>
          <Chip $w={132} $ml={40} $solid>不复权</Chip>
        </Bar>

        <PriceChart />

        <Bar>
          <Chip $w={151}>
            <Label $size={35.5}>成交量</Label>
            <Caret $w={16} $h={12} $ml={13} />
          </Chip>
          <Values $ml={5}>
            <Value $w={109}><Condensed $x={0.81}>259.9万</Condensed></Value>
            <Value $w={30}><Arrow color={ink} /></Value>
            <Value $w={167} $color="#f0c419"><Condensed $x={0.76}>MA1:127.1万</Condensed></Value>
            <Value $w={29}><Arrow color="#f0c419" /></Value>
            <Value $w={182} $color="#d22cd2"><Condensed $x={0.82}>MA2:95.58万</Condensed></Value>
            <Value $w={31}><Arrow color="#d22cd2" /></Value>
            <Value $w={260} $color="#888"><Condensed $x={0.82}>虚拟成交量:264.6万</Condensed></Value>
          </Values>
        </Bar>

        <VolumeChart />

        <SliderRow>
          <Track>
            <Thumb><i /><i /><i /></Thumb>
            <Thumb><i /><i /><i /></Thumb>
          </Track>
        </SliderRow>

        <Promo>
          <svg width="50" height="40" viewBox="0 0 50 40" fill="#ea5504">
            <path d="M1 12H4V27H1ZM10 11L44 0H46V40H43L38 36Q34 39 28 36L26 32H18L10 28Z" />
          </svg>
          <NoticeText $ml={51} $lift={1} $track={0.5}>小额授信上限5000万元，即时生效&gt;&gt;</NoticeText>
          <Divider />
          <Cross color={orange} size={32} w={3} />
        </Promo>

        <Tabs $top $pad={28}>
          {["股吧", "盘口", "资讯", "公告", "研报", "财务", "资料"].map((t, i) => (
            <Tab key={t} $w={146.2} $active={i === 0}><TabText>{t}</TabText></Tab>
          ))}
        </Tabs>

        <Cards>
          <Card>
            <CardArt width="260" height="120" viewBox="0 0 260 120">
              <path d="M52 0H260V120H0V32H48Z" fill="#fef2f0" />
              <path d="M104 24H222L230 120H36V82H100Z" fill="#fff7f5" />
              <path d="M127 53H202L205 120H76V101H126Z" fill="#fce9e7" />
              <path d="M146 108L177 99V120H146Z" fill="#fdf3f1" />
            </CardArt>
            <CardHead>
              <svg width="48" height="48" viewBox="0 0 48 48">
                <defs>
                  <linearGradient id="badge" x1="0" y1="0" x2="0" y2="1">
                    <stop offset="0" stopColor="#dc524f" />
                    <stop offset="1" stopColor="#efa9a4" />
                  </linearGradient>
                </defs>
                <circle cx="24" cy="24" r="24" fill="url(#badge)" />
                <path d="M10 20H15.500L15 36H9ZM18 12H30.500L31 36H17.500ZM33.500 24H38L39 36H33Z" fill="#fff" />
                <text x="24" y="29" fontSize="14" fontWeight="700" fill="#de6a66" textAnchor="middle">1</text>
              </svg>
              <CardTitle>人气榜</CardTitle>
              <svg width="16" height="24" viewBox="0 0 16 24" fill="none" stroke="#b4b0b0" strokeWidth="2.600">
                <path d="M2 1L13 12L2 23" />
              </svg>
            </CardHead>
            <Rank>A股市场排名第<b>138</b>名</Rank>
          </Card>
          <Card>
            <CardArt width="245" height="120" viewBox="0 0 245 120">
              <path d="M2 0H245V120H14Z" fill="#fef1ef" />
              <text x="55" y="148" fontSize="150" fontWeight="800" fontStyle="italic" fill="#fce8e6" stroke="#fff6f5" strokeWidth="18" paintOrder="stroke" textLength="188" lengthAdjust="spacingAndGlyphs">VS</text>
            </CardArt>
            <CardHead>
              <svg width="48" height="48" viewBox="0 0 48 48">
                <circle cx="24" cy="24" r="24" fill="url(#badge)" />
                <text x="7" y="34" fontSize="29" fontWeight="800" fontStyle="italic" fill="#fff" textLength="32" lengthAdjust="spacingAndGlyphs">VS</text>
              </svg>
              <CardTitle>多空看盘</CardTitle>
            </CardHead>
            <Battle>
              <Side $bg="#f9d3d0" />
              <Side $bg="#d5eddb" />
            </Battle>
          </Card>
        </Cards>

        <BottomBar>
          <BottomItems>
            <IndexBox>
              <Caret $up $w={21} $h={7} $color="#7a7a7e" />
              <IndexValue>3773.87</IndexValue>
              <IndexRow>
                <Label $size={35} $color={grey}>上证</Label>
                <Label $size={37} $color={red}>0.20%</Label>
              </IndexRow>
            </IndexBox>
            <NavItem>
              <svg width="66" height="58" viewBox="0 0 66 58" fill="none" stroke={grey} strokeWidth="2.800">
                <path d="M17 7Q24 1.500 33 1.500Q60 3 61.500 29Q61.500 37 56.500 43L65 38.500" />
                <path d="M50 50Q42 56.500 33 56.500Q7 54 5.500 29Q5.500 21 9.500 15.500L0.500 19" />
                <path d="M23 16L33 26.500L43 16M22 27H44M22 35.500H44M33 26.500V45" />
              </svg>
              <Label $size={35} $color={grey}>交易</Label>
            </NavItem>
            <NavItem>
              <svg width="56" height="58" viewBox="0 0 56 58" fill="none" stroke={grey} strokeWidth="3">
                <path d="M42 3H7Q2 3 2 8V50Q2 55 7 55H49Q54 55 54 50V19" />
                <path d="M51 3L55 7L53 11L48 7ZM46 9L51 13L29 34L19 39L24 29Z" fill={grey} stroke="none" />
              </svg>
              <Label $size={35} $color={grey}>发帖</Label>
            </NavItem>
            <NavItem>
              <svg width="54" height="58" viewBox="0 0 54 58" fill="none" stroke={grey} strokeWidth="3">
                <rect x="3" y="4.500" width="21" height="22" rx="4" />
                <rect x="3" y="32" width="21" height="22" rx="4" />
                <rect x="30" y="32" width="21" height="22" rx="4" />
                <path d="M38.500 5Q40.500 3 42.500 5L51.500 14Q53 15.800 51.500 17.500L42.500 26.500Q40.500 28.500 38.500 26.500L30 17.500Q28.500 15.800 30 14Z" />
              </svg>
              <Label $size={35} $color={grey}>功能</Label>
            </NavItem>
            <NavItem>
              <svg width="58" height="58" viewBox="0 0 58 58">
                <circle cx="29" cy="29" r="26.500" fill="none" stroke={grey} strokeWidth="3" />
                <g fill={grey}>
                  <circle cx="17.500" cy="29" r="3" />
                  <circle cx="29" cy="29" r="3" />
                  <circle cx="40.500" cy="29" r="3" />
                </g>
              </svg>
              <Label $size={35} $color={grey}>设自选</Label>
            </NavItem>
          </BottomItems>
          <HomeBar />
        </BottomBar>
      </Screen>
    </>
  );
}
